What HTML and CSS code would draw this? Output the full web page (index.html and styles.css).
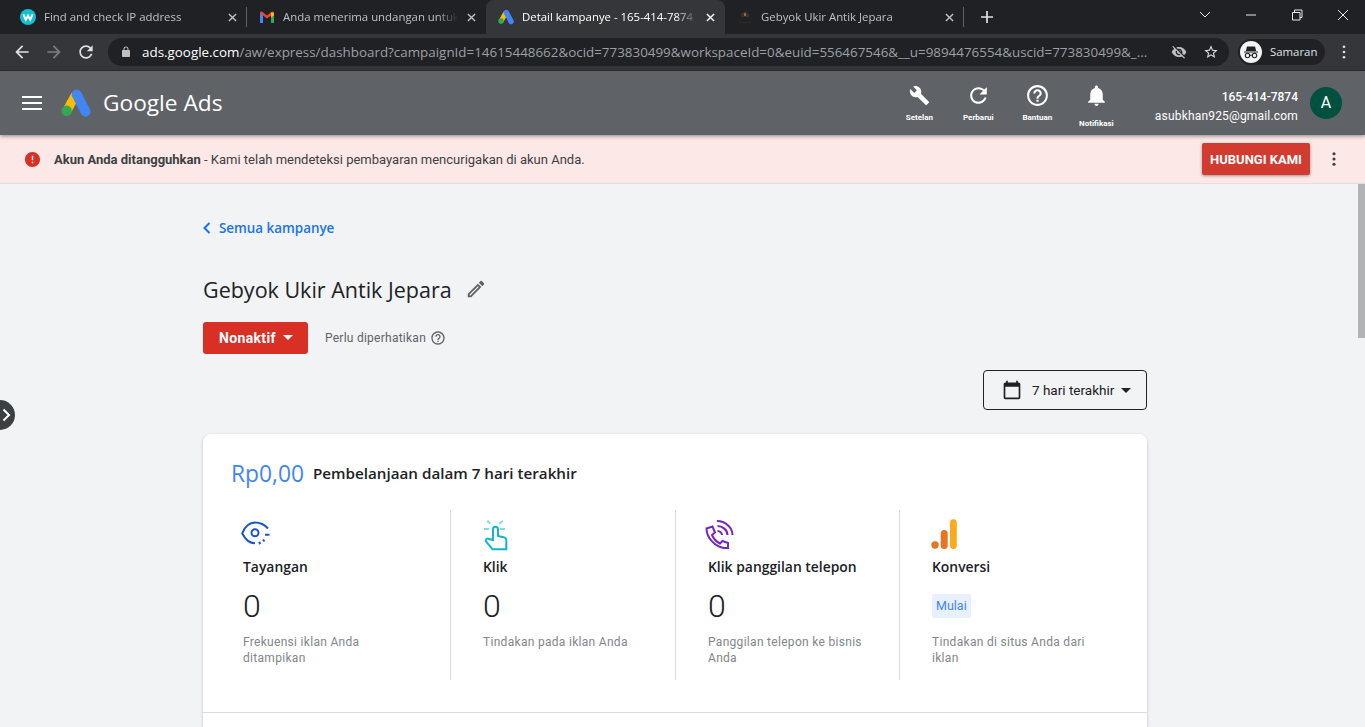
FILE: index.html
```html
<!DOCTYPE html>
<html lang="id">

<head>
  <meta charset="utf-8" />
  <title>Detail kampanye - 165-414-7874</title>
  <link rel="stylesheet" href="styles.css">
</head>

<body>
  <!-- browser tabs -->
  <div class="tabstrip">
    <div class="tab">
      <svg class="favicon" viewBox="0 0 16 16"><circle cx="8" cy="8" r="8" fill="#11bfcf"/><path d="M3.4 5.4l2.4 5.4L8 6.6l2.2 4.2 2.4-5.4" fill="none" stroke="#fff" stroke-width="2"/></svg>
      <span class="tab-title">Find and check IP address</span>
      <svg class="tab-close" viewBox="0 0 10 10"><path d="M1 1l8 8M9 1l-8 8"/></svg>
    </div>
    <div class="tab tab-sep">
      <svg class="favicon" viewBox="0 0 16 16"><path d="M1 14V3.5l3 .5v10z" fill="#4285f4"/><path d="M15 14V3.5l-3 .5v10z" fill="#34a853"/><path d="M1 3.8C1 2.4 2.4 2 3.4 2.8L8 6.4l4.6-3.6c1-.8 2.4-.4 2.4 1L12 6.6 8 9.6 4 6.6z" fill="#ea4335"/><path d="M12 3.4l3 .4v2.6l-3 2.2z" fill="#fbbc04"/></svg>
      <span class="tab-title">Anda menerima undangan untuk</span>
      <svg class="tab-close" viewBox="0 0 10 10"><path d="M1 1l8 8M9 1l-8 8"/></svg>
    </div>
    <div class="tab tab-active">
      <svg class="favicon" viewBox="0 0 30 28"><use href="#ads-logo"/></svg>
      <span class="tab-title">Detail kampanye - 165-414-7874</span>
      <svg class="tab-close" viewBox="0 0 10 10"><path d="M1 1l8 8M9 1l-8 8"/></svg>
    </div>
    <div class="tab">
      <svg class="favicon" viewBox="0 0 16 16"><path d="M8 2l4 3v3H4V5z" fill="#3a3026"/><rect x="7" y="4" width="2" height="3" fill="#8a6a3a"/><rect x="2" y="13" width="12" height="1" fill="#33291e"/></svg>
      <span class="tab-title">Gebyok Ukir Antik Jepara</span>
      <svg class="tab-close" viewBox="0 0 10 10"><path d="M1 1l8 8M9 1l-8 8"/></svg>
    </div>
    <span class="strip-sep"></span>
    <svg class="new-tab" viewBox="0 0 12 12"><path d="M6 0v12M0 6h12"/></svg>
    <div class="win-controls">
      <svg viewBox="0 0 46 30"><path d="M19 12l5 5 5-5" class="thin"/></svg>
      <svg viewBox="0 0 46 30"><path d="M19 15h10" class="thin"/></svg>
      <svg viewBox="0 0 46 30"><path d="M19.5 12.5h7.500v7.500h-7.500zM21.500 12.500v-2.500h7.500v7.500h-2" class="thin"/></svg>
      <svg viewBox="0 0 46 30"><path d="M19 10l10 10M29 10l-10 10" class="thin"/></svg>
    </div>
  </div>

  <!-- address bar -->
  <div class="toolbar">
    <svg class="tool-icon" viewBox="0 0 24 24"><path d="M20 11H7.830l5.590-5.590L12 4l-8 8 8 8 1.410-1.410L7.830 13H20v-2z"/></svg>
    <svg class="tool-icon dim" viewBox="0 0 24 24"><path d="M12 4l-1.410 1.410L16.170 11H4v2h12.170l-5.580 5.590L12 20l8-8z"/></svg>
    <svg class="tool-icon" viewBox="0 0 24 24"><path d="M17.650 6.350C16.200 4.900 14.210 4 12 4c-4.420 0-7.990 3.580-7.990 8s3.570 8 7.990 8c3.730 0 6.840-2.550 7.730-6h-2.080c-.82 2.330-3.040 4-5.650 4-3.310 0-6-2.690-6-6s2.690-6 6-6c1.660 0 3.140.69 4.220 1.780L13 11h7V4l-2.350 2.350z"/></svg>
    <div class="omnibox">
      <svg class="lock" viewBox="0 0 24 24"><path d="M18 8h-1V6c0-2.760-2.240-5-5-5S7 3.240 7 6v2H6c-1.100 0-2 .9-2 2v10c0 1.100.9 2 2 2h12c1.100 0 2-.9 2-2V10c0-1.100-.9-2-2-2zM9 6c0-1.660 1.340-3 3-3s3 1.340 3 3v2H9V6z"/></svg>
      <span class="url"><b>ads.google.com</b>/aw/express/dashboard?campaignId=14615448662&amp;ocid=773830499&amp;workspaceId=0&amp;euid=556467546&amp;__u=9894476554&amp;uscid=773830499&amp;_...</span>
      <svg class="omni-icon" viewBox="0 0 24 24"><path d="M12 7c2.760 0 5 2.240 5 5 0 .65-.13 1.260-.36 1.830l2.920 2.920c1.510-1.260 2.700-2.890 3.430-4.750-1.730-4.390-6-7.500-11-7.500-1.400 0-2.740.25-3.980.7l2.160 2.160C10.740 7.130 11.350 7 12 7zM2 4.270l2.280 2.280.46.46C3.080 8.300 1.780 10.020 1 12c1.730 4.390 6 7.500 11 7.500 1.550 0 3.030-.3 4.380-.84l.42.42L19.730 22 21 20.730 3.270 3 2 4.270zM7.530 9.800l1.550 1.550c-.05.21-.08.43-.08.65 0 1.660 1.340 3 3 3 .22 0 .44-.03.65-.08l1.550 1.550c-.67.33-1.410.53-2.200.53-2.760 0-5-2.240-5-5 0-.79.2-1.530.53-2.200zm4.310-.78l3.150 3.150.02-.16c0-1.660-1.340-3-3-3l-.17.01z"/></svg>
      <svg class="omni-icon star" viewBox="0 0 24 24"><path d="M22 9.240l-7.190-.62L12 2 9.190 8.630 2 9.240l5.460 4.730L5.820 21 12 17.270 18.180 21l-1.630-7.030L22 9.240zM12 15.400l-3.760 2.270 1-4.280-3.320-2.880 4.380-.38L12 6.100l1.710 4.040 4.380.38-3.320 2.880 1 4.280L12 15.400z"/></svg>
    </div>
    <div class="incognito">
      <span class="incognito-pic">
        <svg viewBox="0 0 22 22"><path d="M4 10.500h14v1H4zM7 5.500h8l1.200 4.500H5.800z" fill="#202124"/><circle cx="7.500" cy="14.500" r="2.200" fill="none" stroke="#202124" stroke-width="1.100"/><circle cx="14.500" cy="14.500" r="2.200" fill="none" stroke="#202124" stroke-width="1.100"/><path d="M9.700 14.200h2.600" stroke="#202124" stroke-width="1"/></svg>
      </span>
      <span>Samaran</span>
    </div>
    <svg class="chrome-menu" viewBox="0 0 4 16"><circle cx="2" cy="2" r="1.500"/><circle cx="2" cy="8" r="1.500"/><circle cx="2" cy="14" r="1.500"/></svg>
  </div>

  <!-- ads header -->
  <header class="ads-header">
    <svg class="hamburger" viewBox="0 0 20 14"><path d="M0 1h20M0 7h20M0 13h20"/></svg>
    <svg class="ads-logo" viewBox="0 0 30 28">
      <g id="ads-logo">
        <path d="M6 21.500L14.500 6" stroke="#fbbc04" stroke-width="9" fill="none"/>
        <path d="M15.700 5.500l8.800 17" stroke="#4285f4" stroke-width="10" stroke-linecap="round" fill="none"/>
        <circle cx="5.700" cy="21.700" r="5.200" fill="#34a853"/>
      </g>
    </svg>
    <span class="ads-name">Google Ads</span>
    <div class="hdr-tools">
      <div class="hdr-tool">
        <svg class="wrench" viewBox="0 0 24 24"><path d="M22.700 19l-9.100-9.100c.9-2.300.4-5-1.500-6.900-2-2-5-2.400-7.400-1.300L9 6 6 9 1.600 4.700C.4 7.100.9 10.100 2.900 12.100c1.900 1.900 4.600 2.400 6.900 1.500l9.100 9.100c.4.4 1 .4 1.400 0l2.300-2.300c.5-.4.5-1.100.1-1.400z"/></svg>
        <span>Setelan</span>
      </div>
      <div class="hdr-tool">
        <svg viewBox="0 0 24 24"><path d="M17.650 6.350C16.200 4.900 14.210 4 12 4c-4.420 0-7.990 3.580-7.990 8s3.570 8 7.990 8c3.730 0 6.840-2.550 7.730-6h-2.080c-.82 2.330-3.040 4-5.650 4-3.310 0-6-2.690-6-6s2.690-6 6-6c1.660 0 3.140.69 4.220 1.780L13 11h7V4l-2.350 2.350z"/></svg>
        <span>Perbarui</span>
      </div>
      <div class="hdr-tool">
        <svg viewBox="0 0 24 24"><path d="M11 18h2v-2h-2v2zm1-16C6.480 2 2 6.480 2 12s4.480 10 10 10 10-4.480 10-10S17.520 2 12 2zm0 18c-4.410 0-8-3.590-8-8s3.590-8 8-8 8 3.590 8 8-3.590 8-8 8zm0-14c-2.210 0-4 1.790-4 4h2c0-1.100.9-2 2-2s2 .9 2 2c0 2-3 1.750-3 5h2c0-2.250 3-2.500 3-5 0-2.210-1.790-4-4-4z"/></svg>
        <span>Bantuan</span>
      </div>
      <div class="hdr-tool hdr-tool-low">
        <svg viewBox="0 0 24 24"><path d="M12 22c1.100 0 2-.9 2-2h-4c0 1.100.89 2 2 2zm6-6v-5c0-3.070-1.640-5.640-4.500-6.320V4c0-.83-.67-1.500-1.500-1.500s-1.500.67-1.500 1.500v.68C7.630 5.360 6 7.920 6 11v5l-2 2v1h16v-1l-2-2z"/></svg>
        <span>Notifikasi</span>
      </div>
    </div>
    <div class="account">
      <strong>165-414-7874</strong>
      <span>asubkhan925@gmail.com</span>
    </div>
    <div class="avatar">A</div>
  </header>

  <!-- suspended notice -->
  <div class="notice">
    <svg class="notice-icon" viewBox="2 2 20 20"><path d="M12 2C6.480 2 2 6.480 2 12s4.480 10 10 10 10-4.480 10-10S17.520 2 12 2zm1 15h-2v-2h2v2zm0-4h-2V7h2v6z"/></svg>
    <p class="notice-text"><b>Akun Anda ditangguhkan</b> - Kami telah mendeteksi pembayaran mencurigakan di akun Anda.</p>
    <button class="contact-btn">HUBUNGI KAMI</button>
    <svg class="notice-more" viewBox="0 0 4 16"><circle cx="2" cy="2" r="1.800"/><circle cx="2" cy="8" r="1.800"/><circle cx="2" cy="14" r="1.800"/></svg>
  </div>

  <div class="page">
    <main class="content">
      <a class="back-link">
        <svg viewBox="0 0 8 12"><path d="M6.500 1L1.500 6l5 5"/></svg>
        Semua kampanye
      </a>

      <div class="title-row">
        <h1>Gebyok Ukir Antik Jepara</h1>
        <svg viewBox="0 0 24 24"><path d="M3 17.250V21h3.750L17.810 9.940l-3.750-3.750L3 17.250zM5.920 19H5v-.92l9.060-9.060.92.92L5.920 19zM20.710 7.040c.39-.39.39-1.020 0-1.410l-2.340-2.340c-.39-.39-1.020-.39-1.410 0l-1.830 1.830 3.750 3.750 1.830-1.830z"/></svg>
      </div>

      <div class="status-row">
        <button class="status-btn">Nonaktif <i class="caret"></i></button>
        <span class="status-note">Perlu diperhatikan</span>
        <svg class="status-help" viewBox="0 0 24 24"><path d="M11 18h2v-2h-2v2zm1-16C6.480 2 2 6.480 2 12s4.480 10 10 10 10-4.480 10-10S17.520 2 12 2zm0 18c-4.410 0-8-3.590-8-8s3.590-8 8-8 8 3.590 8 8-3.590 8-8 8zm0-14c-2.210 0-4 1.790-4 4h2c0-1.100.9-2 2-2s2 .9 2 2c0 2-3 1.750-3 5h2c0-2.250 3-2.500 3-5 0-2.210-1.790-4-4-4z"/></svg>
      </div>

      <div class="date-row">
        <button class="date-btn">
          <svg viewBox="0 0 24 24"><path d="M20 3h-1V1h-2v2H7V1H5v2H4c-1.100 0-2 .9-2 2v16c0 1.100.9 2 2 2h16c1.100 0 2-.9 2-2V5c0-1.100-.9-2-2-2zm0 18H4V8h16v13z"/></svg>
          <span>7 hari terakhir</span>
          <i class="caret dark"></i>
        </button>
      </div>

      <section class="card">
        <div class="spend">
          <span class="spend-value">Rp0,00</span>
          <span class="spend-label">Pembelanjaan dalam 7 hari terakhir</span>
        </div>
        <div class="stats">
          <div class="stat">
            <svg class="stat-icon" viewBox="0 0 30 32" fill="none" stroke="#1a56c4" stroke-width="2">
              <path d="M27 10.500C23.500 6.500 19 4.500 14 4.500 8.500 4.500 4 8.500 1.200 15.300 4 21 8.500 25.300 14 25.300"/>
              <circle cx="14" cy="14.700" r="3.500"/>
              <path d="M24 16.700h4.500M18.300 23.700l.7 2.500M22 21.500l1.500 2"/>
            </svg>
            <h3>Tayangan</h3>
            <div class="stat-num">0</div>
            <p>Frekuensi iklan Anda ditampikan</p>
          </div>
          <div class="stat">
            <svg class="stat-icon" viewBox="0 0 30 32" fill="none" stroke="#12b5cb" stroke-width="2">
              <path d="M6.300 2.700L9 5.500M22 2.700l-4 3M3 11h5M19 11h5" stroke="#7fdcea"/>
              <path d="M12 22V11.500c0-3.600 5-3.600 5 0V18l6.500 1.500c1.200.3 1.800 1 1.800 2.500v9.300H11.500L5 23.500c-1.200-1.700 1-3.800 3-2.500z"/>
            </svg>
            <h3>Klik</h3>
            <div class="stat-num">0</div>
            <p>Tindakan pada iklan Anda</p>
          </div>
          <div class="stat">
            <svg class="stat-icon" viewBox="0 0 30 32" fill="none" stroke="#7627bb" stroke-width="2">
              <path d="M.5 10.500l6-2 2.500 6-3 2.500c1.500 3.500 4 6.500 8 8.500l2.500-2.500 5.500 2v5h-4C9.500 29 .5 20 .5 10.500z"/>
              <path d="M11 3c8.500 0 15.500 6.500 15.500 14M11.500 8c5 0 10 4 10 9M11.500 13c2.500 0 4.500 2 4.500 4"/>
            </svg>
            <h3>Klik panggilan telepon</h3>
            <div class="stat-num">0</div>
            <p>Panggilan telepon ke bisnis Anda</p>
          </div>
          <div class="stat">
            <svg class="stat-icon" viewBox="0 0 30 32">
              <circle cx="5" cy="27" r="3.700" fill="#e37627"/>
              <rect x="10.700" y="12" width="7" height="19" rx="3.500" fill="#e37627"/>
              <rect x="20" y="1.300" width="6.800" height="29.700" rx="3.400" fill="#f9ab1c"/>
            </svg>
            <h3>Konversi</h3>
            <div class="stat-start"><span class="start-chip">Mulai</span></div>
            <p>Tindakan di situs Anda dari iklan</p>
          </div>
        </div>
      </section>
    </main>
    <div class="scroll-track"><div class="scroll-thumb"></div></div>
    <!-- side handle lies over the page -->
    <div class="side-handle"><svg viewBox="0 0 10 14"><path d="M1.500 1.500L7 7l-5.500 5.500"/></svg></div>
  </div>
</body>

</html>
```

FILE: styles.css
```css
* {
  box-sizing: border-box;
}

html,
body {
  height: 100%;
}

body {
  margin: 0;
  height: 727px;
  overflow: hidden;
  display: flex;
  flex-direction: column;
  background-color: #f1f3f5;
  color: #202124;
  font: 12px Roboto, "Liberation Sans", sans-serif;
}

h1,
h3,
p {
  margin: 0;
  font-weight: normal;
}

button {
  border: 0;
  padding: 0;
  font-family: inherit;
}

/* tab strip */
.tabstrip {
  flex: none;
  height: 34px;
  display: flex;
  align-items: center;
  padding-left: 8px;
  background-color: #202124;
}

.tab {
  position: relative;
  flex: none;
  width: 239px;
  height: 34px;
  display: flex;
  align-items: center;
  padding-left: 12px;
  color: #bdc1c6;
  font: 11.400px "Open Sans", sans-serif;
}

.tab-sep::before,
.strip-sep {
  content: "";
  width: 1px;
  height: 20px;
  background-color: #5f6368;
}

.tab-sep::before {
  position: absolute;
  left: -1px;
  top: 7px;
}

.strip-sep {
  margin-left: -1px;
}

.tab-active {
  background-color: #35363a;
  border-radius: 8px 8px 0 0;
  color: #fff;
}

.favicon {
  flex: none;
  width: 16px;
  height: 16px;
  margin-right: 8px;
}

.tab-title {
  width: 175px;
  margin-bottom: 2px;
  white-space: nowrap;
  overflow: hidden;
  -webkit-mask-image: linear-gradient(to right, #000 88%, transparent);
  mask-image: linear-gradient(to right, #000 88%, transparent);
}

.tab-close {
  width: 9px;
  height: 9px;
  margin-left: 9px;
  fill: none;
  stroke: #bdc1c6;
  stroke-width: 1.6;
}

.tab-active .tab-close {
  stroke: #fff;
}

.new-tab {
  width: 12px;
  height: 12px;
  margin-left: 17px;
  fill: none;
  stroke: #dee1e6;
  stroke-width: 1.700;
}

.win-controls {
  margin-left: auto;
  margin-top: -4px;
  display: flex;
}

.win-controls svg {
  width: 46px;
  height: 30px;
}

.thin {
  fill: none;
  stroke: #e8eaed;
  stroke-width: 1;
}

/* toolbar */
.toolbar {
  flex: none;
  height: 37px;
  display: flex;
  align-items: center;
  padding: 0 0 1px 12px;
  background-color: #35363a;
  border-bottom: 1px solid #26272a;
}

.tool-icon {
  flex: none;
  width: 20px;
  height: 20px;
  margin-right: 12px;
  fill: #dee1e6;
}

.tool-icon.dim {
  fill: #7a7d82;
}

.omnibox {
  flex: none;
  width: 1121px;
  height: 28px;
  display: flex;
  align-items: center;
  padding: 0 10px 0 7px;
  border-radius: 14px;
  background-color: #202124;
}

.lock {
  flex: none;
  width: 12px;
  height: 12px;
  margin-right: 10px;
  margin-left: 5px;
  fill: #bdc1c6;
}

.url {
  flex: 1;
  min-width: 0;
  white-space: nowrap;
  overflow: hidden;
  color: #9aa0a6;
  font: 13.400px "Open Sans", sans-serif;
}

.url b {
  color: #fff;
  font-weight: normal;
}

.omni-icon {
  flex: none;
  width: 16px;
  height: 16px;
  margin-left: 14px;
  fill: #bdc1c6;
}

.star {
  fill: #dee1e6;
  margin-left: 16px;
}

.incognito {
  flex: none;
  width: 87px;
  height: 26px;
  margin-left: 9px;
  display: flex;
  align-items: center;
  gap: 8px;
  padding-left: 2px;
  border-radius: 13px;
  background-color: #202124;
  color: #dee1e6;
  font: 11.400px "Open Sans", sans-serif;
}

.incognito-pic {
  width: 22px;
  height: 22px;
  border-radius: 50%;
  background-color: #f1f3f4;
}

.incognito-pic svg {
  display: block;
}

.chrome-menu {
  flex: none;
  width: 4px;
  height: 14px;
  margin-left: 17px;
  fill: #dee1e6;
}

/* ads header */
.ads-header {
  flex: none;
  height: 64px;
  position: relative;
  z-index: 2;
  display: flex;
  align-items: center;
  padding: 0 23px 0 22px;
  background-color: #5f6368;
  box-shadow: 0 1px 4px rgba(60, 64, 67, 0.6);
  color: #fff;
}

.hamburger {
  width: 20px;
  height: 14px;
  fill: none;
  stroke: #fff;
  stroke-width: 2;
}

.ads-logo {
  width: 30px;
  height: 28px;
  margin-left: 19px;
}

.ads-name {
  margin-left: 12px;
  margin-bottom: 2px;
  font: 22.700px "Open Sans", sans-serif;
}

.hdr-tools {
  margin-left: auto;
  padding-top: 5px;
  display: flex;
}

.hdr-tool {
  width: 59px;
  display: flex;
  flex-direction: column;
  align-items: center;
  font-size: 8px;
  font-weight: 700;
}

.hdr-tool svg {
  width: 25px;
  height: 25px;
  margin-bottom: 5px;
  fill: #fff;
}

.hdr-tool .wrench {
  padding: 2px;
}

.hdr-tool-low span {
  margin-top: 6px;
}

.account {
  margin-left: 29px;
  padding-top: 6px;
  display: flex;
  flex-direction: column;
  align-items: flex-end;
  gap: 5px;
  letter-spacing: 0.18px;
  line-height: 14px;
}

.account strong {
  font-weight: 500;
  letter-spacing: 0;
}

.avatar {
  width: 32px;
  height: 32px;
  margin-left: 12px;
  border-radius: 50%;
  background-color: #00513f;
  font-size: 16px;
  line-height: 32px;
  text-align: center;
}

/* notice */
.notice {
  flex: none;
  height: 49px;
  display: flex;
  align-items: center;
  padding: 0 29px 0 25px;
  border-bottom: 1px solid #e3dfdf;
  background-color: #fce8e6;
}

.notice-icon {
  width: 15px;
  height: 15px;
  fill: #d93025;
}

.notice-text {
  margin-left: 14px;
  color: #3c4043;
  font-size: 13px;
}

.notice-text b {
  font-weight: 700;
}

.contact-btn {
  width: 108px;
  height: 32px;
  margin-left: auto;
  border-radius: 2px;
  background-color: #d23c30;
  box-shadow: 0 1px 3px rgba(60, 64, 67, 0.5);
  color: #fff;
  font-size: 13px;
  font-weight: 700;
}

.notice-more {
  width: 4px;
  height: 14px;
  margin-left: 22px;
  fill: #3c4043;
}

/* page body */
.page {
  flex: 1;
  min-height: 0;
  position: relative;
  display: flex;
}

.content {
  flex: none;
  width: 944px;
  margin-left: 203px;
  padding-top: 35px;
}

.scroll-track {
  flex: none;
  width: 7px;
  margin-left: auto;
}

.scroll-thumb {
  height: 154px;
  background-color: #b2b3b4;
}

.side-handle {
  position: absolute;
  left: -15px;
  top: 216px;
  width: 30px;
  height: 30px;
  display: flex;
  align-items: center;
  justify-content: flex-end;
  padding-right: 3px;
  border-radius: 50%;
  background-color: #3c4043;
}

.side-handle svg {
  width: 10px;
  height: 14px;
  fill: none;
  stroke: #fff;
  stroke-width: 2;
}

.back-link {
  height: 18px;
  display: flex;
  align-items: center;
  gap: 8px;
  color: #1a73e8;
  font: 600 13.400px "Open Sans", sans-serif;
}

.back-link svg {
  width: 8px;
  height: 14px;
  fill: none;
  stroke: #1a73e8;
  stroke-width: 2;
}

.title-row {
  height: 30px;
  margin-top: 37px;
  display: flex;
  align-items: center;
  gap: 13px;
}

.title-row h1 {
  font: 21.500px "Open Sans", sans-serif;
}

.title-row svg {
  width: 22px;
  height: 22px;
  fill: #5f6368;
}

.status-row {
  height: 32px;
  margin-top: 18px;
  display: flex;
  align-items: center;
}

.status-btn {
  width: 105px;
  height: 32px;
  display: flex;
  align-items: center;
  gap: 7px;
  padding: 0 0 1px 16px;
  border-radius: 3px;
  background-color: #d93025;
  color: #fff;
  font-size: 14px;
  font-weight: 700;
  letter-spacing: 0.35px;
}

.caret {
  width: 0;
  height: 0;
  border-left: 5px solid transparent;
  border-right: 5px solid transparent;
  border-top: 5px solid #fff;
}

.caret.dark {
  border-top-color: #202124;
}

.status-note {
  margin-left: 17px;
  color: #5f6368;
  letter-spacing: 0.25px;
}

.status-help {
  width: 16px;
  height: 16px;
  margin-left: 4px;
  fill: #5f6368;
}

.date-row {
  margin-top: 16px;
  display: flex;
  justify-content: flex-end;
}

.date-btn {
  width: 164px;
  height: 40px;
  display: flex;
  align-items: center;
  padding-left: 18px;
  border: 1px solid #202124;
  border-radius: 4px;
  background: none;
  color: #202124;
  font-size: 13.500px;
}

.date-btn svg {
  width: 20px;
  height: 20px;
  fill: #202124;
}

.date-btn span {
  margin: 0 7px 0 10px;
}

/* card */
.card {
  margin-top: 24px;
  height: 400px;
  padding-top: 28px;
  border-radius: 8px 8px 0 0;
  background-color: #fff;
  box-shadow: 0 1px 3px rgba(60, 64, 67, 0.3);
}

.spend {
  height: 22px;
  display: flex;
  align-items: center;
  padding-left: 28px;
}

.spend-value {
  color: #4285f4;
  font: 22.800px "Open Sans", sans-serif;
}

.spend-label {
  margin-left: 9px;
  font: 600 15.200px "Open Sans", sans-serif;
}

.stats {
  display: grid;
  grid-template-columns: 219px 225px 224px 224px;
  margin-top: 26px;
  padding: 0 0 32px 28px;
  border-bottom: 1px solid #dadce0;
}

.stat {
  height: 170px;
  padding: 8px 24px 0 32px;
  border-left: 1px solid #dadce0;
}

.stat:first-child {
  padding: 8px 48px 0 12px;
  border-left: 0;
}

.stat-icon {
  display: block;
  width: 30px;
  height: 32px;
  margin-left: -2px;
  overflow: visible;
}

.stat h3 {
  margin-top: 7px;
  font: 600 13.900px/20px "Open Sans", sans-serif;
}

.stat-num {
  height: 40px;
  margin-top: 9px;
  font-size: 32px;
  font-weight: 300;
  line-height: 40px;
}

.stat-start {
  height: 40px;
  margin-top: 9px;
  display: flex;
  align-items: center;
}

.start-chip {
  padding: 0 4px;
  border-radius: 2px;
  background-color: #e8f0fe;
  color: #4285f4;
  font-size: 12.500px;
  line-height: 24px;
}

.stat p {
  margin-top: 8px;
  color: #80868b;
  letter-spacing: 0.3px;
  line-height: 16px;
}
```
